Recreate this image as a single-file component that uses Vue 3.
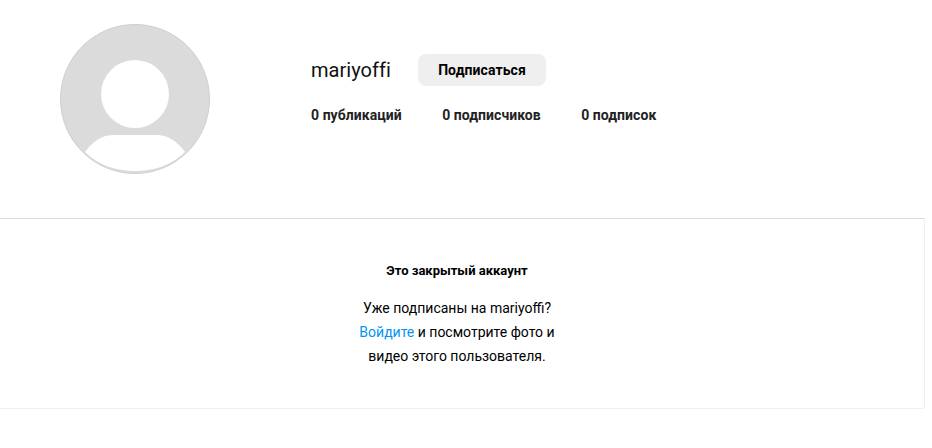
<template>
  <div class="page">
    <header class="profile">
      <svg class="avatar" width="150" height="150" viewBox="0 0 150 150">
        <circle cx="75" cy="75" r="74.5" fill="#dbdbdb" stroke="#cfcfcf" stroke-width="1" />
        <circle cx="75" cy="70" r="34" fill="#fff" />
        <path d="M25 128 C33 117 42 111 54 111 L96 111 C108 111 117 117 125 128 C112 141 94 147 75 147 C56 147 38 141 25 128 Z" fill="#fff" />
      </svg>
      <div class="info">
        <div class="title-row">
          <h1 class="username">{{ username }}</h1>
          <button class="follow">Подписаться</button>
        </div>
        <ul class="stats">
          <li v-for="stat in stats" :key="stat">{{ stat }}</li>
        </ul>
      </div>
    </header>
    <section class="private">
      <h2 class="private-title">Это закрытый аккаунт</h2>
      <p class="private-text">
        Уже подписаны на {{ username }}?<br />
        <a class="login">Войдите</a> и посмотрите фото и<br />
        видео этого пользователя.
      </p>
    </section>
  </div>
</template>

<script setup>
const username = 'mariyoffi'
const stats = ['0 публикаций', '0 подписчиков', '0 подписок']
</script>

<style>
html, body {
  background: #fff;
}
</style>

<style scoped>
.page {
  width: 925px;
  font-family: Roboto, "Liberation Sans", sans-serif;
  color: #000;
}

.profile {
  display: flex;
  box-sizing: border-box;
  height: 218px;
  padding: 24px 0 0 60px;
}

.avatar {
  display: block;
  flex: none;
}

.info {
  margin-left: 101px;
  padding-top: 30px;
}

.title-row {
  display: flex;
  align-items: center;
  gap: 27px;
}

.username {
  margin: 0;
  font-size: 20px;
  font-weight: 400;
  line-height: 32px;
  letter-spacing: 0.05px;
  color: #111;
}

.follow {
  width: 128px;
  height: 32px;
  border: 0;
  border-radius: 8px;
  background: #efefef;
  font: 700 14px/18px Roboto, sans-serif;
  letter-spacing: 0.1px;
  color: #000;
  padding: 0;
}

.stats {
  display: flex;
  gap: 40.4px;
  margin: 20px 0 0;
  padding: 0;
  list-style: none;
  font-size: 14px;
  font-weight: 700;
  line-height: 18px;
  letter-spacing: 0.06px;
  color: #222;
}

.private {
  box-sizing: border-box;
  height: 191px;
  border-top: 1px solid #dbdbdb;
  border-right: 1px solid #efefef;
  border-bottom: 1px solid #efefef;
  border-bottom-right-radius: 3px;
  padding: 44px 10px 0 0;
  text-align: center;
}

.private-title {
  margin: 0;
  font-size: 13px;
  font-weight: 700;
  line-height: 16px;
}

.private-text {
  margin: 17px 0 0;
  font-size: 14px;
  line-height: 24px;
}

.login {
  color: #0095f6;
}
</style>
